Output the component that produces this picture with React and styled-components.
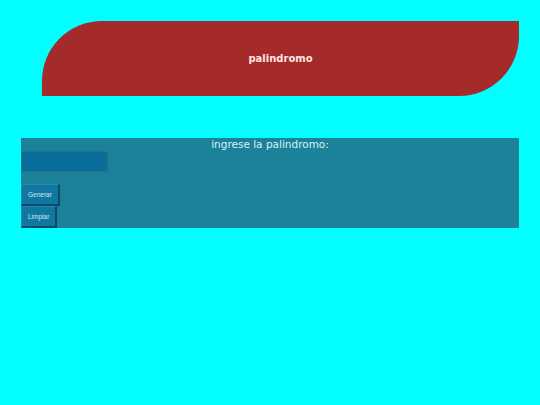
import React from "react";
import styled, { createGlobalStyle } from "styled-components";

const GlobalStyle = createGlobalStyle`
  html, body {
    margin: 0;
    padding: 0;
    background-color: #00ffff;
    font-family: "DejaVu Sans", Verdana, sans-serif;
  }
`;

const Page = styled.div`
  padding: 21px 21px 0 21px;
`;

const Header = styled.header`
  margin-left: 21px;
  height: 75px;
  background-color: #a52a2a;
  border-radius: 60px 0 60px 0;
  display: flex;
  align-items: center;
  justify-content: center;
`;

const Title = styled.h1`
  margin: 0;
  padding-bottom: 1px;
  font-size: 10px;
  font-weight: 700;
  color: #ffe4e1;
`;

const Panel = styled.section`
  margin-top: 42px;
  width: 498px;
  background-color: #1b8299;
  display: flex;
  flex-direction: column;
  align-items: flex-start;
`;

const Label = styled.label`
  align-self: stretch;
  text-align: center;
  font-size: 10.5px;
  line-height: 13px;
  color: #d8f2f4;
`;

const Input = styled.input`
  box-sizing: border-box;
  width: 87px;
  height: 21px;
  margin: 0 0 12px 0;
  padding: 0 4px;
  background-color: #0a6e9b;
  border: 1px solid #2b6f88;
  color: #fff;
  outline: none;
`;

const Button = styled.button`
  box-sizing: border-box;
  height: 22px;
  margin: 0;
  padding: 0 6px;
  background-color: #0f77a0;
  border-style: solid;
  border-width: 1px 2px 2px 1px;
  border-color: #2a8aae #0b4a66 #0b4a66 #2a8aae;
  font-family: "Liberation Sans", Arial, sans-serif;
  font-size: 6.5px;
  color: #d4e8f0;
  cursor: pointer;
`;

const App = () => {
  const [value, setValue] = React.useState("");

  return (
    <>
      <GlobalStyle />
      <Page>
        <Header>
          <Title>palindromo</Title>
        </Header>
        <Panel>
          <Label htmlFor="palabra">ingrese la palindromo:</Label>
          <Input id="palabra" value={value} onChange={(e) => setValue(e.target.value)} />
          <Button>Generar</Button>
          <Button onClick={() => setValue("")}>Limpiar</Button>
        </Panel>
      </Page>
    </>
  );
};

export default App;
